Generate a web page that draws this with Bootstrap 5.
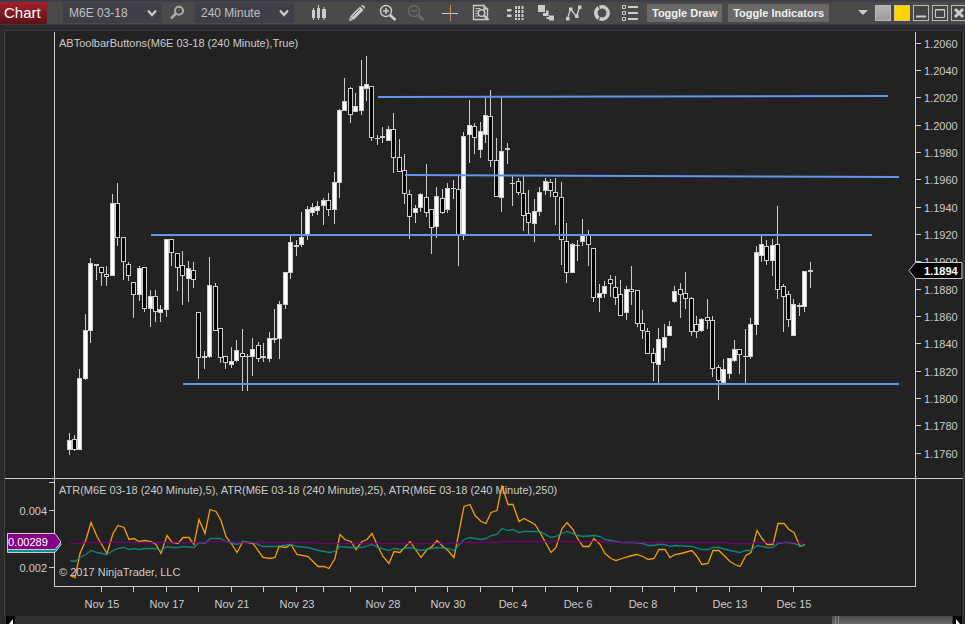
<!DOCTYPE html>
<html lang="en">
<head>
<meta charset="utf-8">
<meta name="viewport" content="width=device-width, initial-scale=1">
<title>Chart</title>
<link href="https://cdn.jsdelivr.net/npm/bootstrap@5.3.0/dist/css/bootstrap.min.css" rel="stylesheet">
<style>
body{background:#2b2a2f;font-family:"Liberation Sans",Arial,sans-serif;color:#ccc;overflow-x:hidden}
.toolbar{height:25px;background:#4a4a4a;border-top:2px solid #3f3e46;border-bottom:1px solid #3a3a3f;overflow:hidden}
.chart-tab{width:47px;height:22px;background:linear-gradient(#a3222b,#5d1216);color:#fff;font-size:15px;line-height:22px;padding:0 0 0 4px;border:0;text-align:left;flex:none}
.pick{--bs-form-select-bg-img:url("data:image/svg+xml,%3csvg xmlns='http://www.w3.org/2000/svg' viewBox='0 0 10 8'%3e%3cpath d='M1 1.5l4 4.5 4-4.5' fill='none' stroke='%23ccc' stroke-width='2.2'/%3e%3c/svg%3e");height:20px;width:99px;min-height:0;border:0;border-radius:0;background-color:#3f3f47;color:#c0c0c0;font-size:12px;line-height:20px;padding:0 20px 0 6px;background-position:right 5px center;background-size:10px 8px;flex:none}
.tool{width:26px;height:22px;padding:0;border:0;background:none;color:#ccc;display:flex;align-items:center;justify-content:center;flex:none}
.tool svg{display:block}
.tool-search{width:33px;padding-right:4px}
.tool-more{width:18px}
.tools{gap:2px;margin-left:12px}
.sp-s{margin-left:3px}.sp-m{margin-left:6px}.sp-l{margin-left:10px}
.toggle{height:18px;border:0;background:#696969;color:#f0f0f0;font-size:11px;font-weight:700;line-height:18px;padding:0 5px;flex:none;white-space:nowrap}
.toggles{gap:6px;margin-left:4px}
.win{width:16px;height:16px;border:1px solid #b8b8b8;padding:0;background:#444;display:flex;align-items:center;justify-content:center;flex:none;color:#ccc}
.wins{gap:3px;margin-right:-2px}
.win-gray{background:linear-gradient(#b5b3b5,#9d9b9d)}
.win-gold{background:#ffd500;border-color:#d9c67a}
.frame{padding:5px 1px 0 4px}
.plot-box{border:1px solid #3d3d42;border-bottom:0;background:#222}
.plot{width:100%;height:auto;display:block;font-size:11px}
.scroller{height:8px;background:#333;margin:0 2px 0 5px;overflow:hidden}
.arrow{width:9px;height:8px;background:#000;border:0;padding:0;flex:none;display:flex;margin:0 1px}
.thumb{width:120px;height:8px;background:linear-gradient(#4c4c4c,#6a6a6a);border:0;padding:0 0 0 3px;display:flex;gap:2px}
.thumb i{width:1px;height:8px;background:#888}
</style>
<script src="https://cdn.jsdelivr.net/npm/bootstrap@5.3.0/dist/js/bootstrap.bundle.min.js"></script>
</head>
<body>
<header class="toolbar d-flex align-items-center">
  <button class="chart-tab" type="button">Chart</button>
  <select class="form-select pick ms-3" aria-label="Instrument"><option>M6E 03-18</option></select>
  <button class="tool tool-search" type="button" aria-label="Search"><svg width="16" height="16" viewBox="0 0 16 16" fill="none" stroke="#aaa"><circle cx="10" cy="5.800" r="4" stroke-width="2"/><path d="M7 8.500L2 13.500" stroke-width="2.600"/></svg></button>
  <select class="form-select pick" aria-label="Interval"><option>240 Minute</option></select>
  <div class="tools d-flex align-items-center">
    <button class="tool" type="button" aria-label="Chart style"><svg width="16" height="18" viewBox="0 0 16 18" fill="#ccc"><path d="M1 6h3v8H1zM6 4h3v10H6zM11 5h4v9h-4zM2 4h1v12H2zM7 1h1v15H7zM12.500 3h1v13h-1z"/></svg></button>
    <button class="tool sp-l" type="button" aria-label="Drawing tools"><svg width="18" height="18" viewBox="0 0 18 18"><path d="M1 17l1.500-5L12 2.500 15.500 6 6 15.500z" fill="#ccc"/><path d="M13 1.500Q14 .5 15.500 1.500L16.600 2.600Q17.500 4 16.500 5z" fill="#ccc"/><path d="M4.500 12.500L12 5M2.500 13.500l2 2" stroke="#666" fill="none"/></svg></button>
    <button class="tool sp-s" type="button" aria-label="Zoom in"><svg width="18" height="18" viewBox="0 0 18 18" fill="none" stroke="#ccc"><circle cx="7" cy="7" r="5.500" stroke-width="1.400"/><path d="M4 7h6M7 4v6" stroke-width="1.600"/><path d="M11 11l5.500 5" stroke-width="2.800"/></svg></button>
    <button class="tool" type="button" aria-label="Zoom out" disabled><svg width="18" height="18" viewBox="0 0 18 18" fill="none" stroke="#6a6a6a"><circle cx="7" cy="7" r="5.500" stroke-width="1.400"/><path d="M4 7h6" stroke-width="1.600"/><path d="M11 11l5.500 5" stroke-width="2.800"/></svg></button>
    <button class="tool sp-m" type="button" aria-label="Crosshair"><svg width="18" height="18" viewBox="0 0 18 18"><path d="M1 9.500h16" stroke="#ccc"/><path d="M9.500 1v16" stroke="#c89055"/></svg></button>
    <button class="tool sp-s" type="button" aria-label="Data box"><svg width="18" height="18" viewBox="0 0 18 18" fill="none" stroke="#ccc"><path d="M12 1.500H1.500v14H15M12 1.500V5h3.500zM15.500 5v8" stroke-width="1.300"/><path d="M3.500 4.500h5M3.500 7h2.500M3.500 9.500h2M3.500 12h3" stroke-width="1.200"/><circle cx="9.500" cy="9" r="3.300" stroke-width="1.500"/><path d="M12 11.500l4.500 4.500" stroke-width="2.400"/></svg></button>
    <button class="tool sp-m" type="button" aria-label="Bars"><svg width="18" height="18" viewBox="0 0 18 18" fill="#ccc"><path d="M1 5h4l1 1.200L5 7.500H1zM1 10.500h4l1 1.200L5 13H1zM9 2h2v3H9zM9 6h2v3H9zM9 10h2v3H9zM9 14h2v2H9zM12 2h2v3h-2zM12 6h2v3h-2zM12 10h2v3h-2zM12 14h2v2h-2zM15.500 2h2v3h-2zM15.500 6h2v3h-2zM15.500 10h2v3h-2zM15.500 14h2v2h-2z"/></svg></button>
    <button class="tool sp-s" type="button" aria-label="Chart trader"><svg width="18" height="18" viewBox="0 0 18 18" fill="#ccc"><path d="M1 1h7v7H1zM6 9h3V6.500h2.500V12H6zM9.500 13h2.500V11.500h5v5h-5V15H9.500z"/></svg></button>
    <button class="tool" type="button" aria-label="Indicators"><svg width="18" height="18" viewBox="0 0 18 18" fill="#ccc"><path d="M2.500 14.500L5.500 5l6 7.500 3-9" fill="none" stroke="#ccc" stroke-width="1.300"/><path d="M1 13h3.500v3.500H1zM4 3.500h3.500V7H4zM10 10.500h3.500V14H10zM13 1.500h3.500V5H13z"/></svg></button>
    <button class="tool" type="button" aria-label="Strategies"><svg width="18" height="18" viewBox="0 0 18 18" fill="none" stroke="#ccc"><circle cx="9" cy="9" r="6.200" stroke-width="3.500" stroke-dasharray="12 1"/></svg></button>
    <button class="tool" type="button" aria-label="Properties"><svg width="18" height="18" viewBox="0 0 18 18"><path d="M1.500 1.500h3v3h-3zM1.500 7.500h3v3h-3zM1.500 13.500h3v3h-3z" fill="none" stroke="#ccc"/><path d="M7 3h10M7 9h10M7 15h10" stroke="#ccc" stroke-width="2"/></svg></button>
  </div>
  <div class="toggles d-flex align-items-center">
    <button class="toggle" type="button">Toggle Draw</button>
    <button class="toggle" type="button">Toggle Indicators</button>
  </div>
  <div class="wins ms-auto d-flex align-items-center">
    <button class="tool tool-more" type="button" aria-label="More"><svg width="10" height="6" viewBox="0 0 10 6"><path d="M0 0h10L5 5z" fill="#ccc"/></svg></button>
    <button class="win win-gray" type="button" aria-label="Instrument link"></button>
    <button class="win win-gold" type="button" aria-label="Interval link"></button>
    <button class="win" type="button" aria-label="Minimize"><svg width="14" height="14"><path d="M2 10.500h10" stroke="#ccc" stroke-width="2"/></svg></button>
    <button class="win" type="button" aria-label="Maximize"><svg width="14" height="14"><path d="M2.500 3.500h9v8h-9zM2 4h10" fill="none" stroke="#ccc"/></svg></button>
    <button class="win" type="button" aria-label="Close"><svg width="14" height="14"><path d="M3 3l8 8M11 3l-8 8" stroke="#ccc" stroke-width="3"/></svg></button>
  </div>
</header>
<main class="frame">
  <div class="plot-box"><svg class="plot" id="plot" viewBox="5 31 958 585" role="img" aria-label="M6E 03-18, 240 minute candles with ATR"></svg></div>
</main>
<div class="scroller d-flex">
  <button class="arrow" type="button" aria-label="Scroll left"><svg width="9" height="8"><path d="M7 3v5H3z" fill="#fff"/></svg></button>
  <button class="thumb ms-auto" type="button" aria-label="Scroll position"><i></i><i></i></button>
  <button class="arrow" type="button" aria-label="Scroll right"><svg width="9" height="8"><path d="M3 3v5h4z" fill="#fff"/></svg></button>
</div>
<script>
const NS='http://www.w3.org/2000/svg', plot=document.getElementById('plot');
function add(tag,attrs,text){const e=document.createElementNS(NS,tag);for(const k in attrs)e.setAttribute(k,attrs[k]);if(text)e.textContent=text;plot.appendChild(e);return e}
function rect(x,y,w,h,fill){add('rect',{x,y,width:w,height:h,fill})}
function label(x,y,t,o){add('text',Object.assign({x,y,fill:'#ccc'},o),t)}
const AX='#ccc';

// Each bar: high, body top, body bottom, low; w = rising, b = falling
const bars=`433 440 450 455 w,435 439 450 451 b,369 378 450 450 w,314 330 379 380 w,258 263 331 343 w,264 264 266 280 w,267 267 273 286 b,266 274 277 286 b,194 203 276 276 w,183 203 238 246 b
237 237 262 280 b,262 264 276 281 b,282 282 295 318 b,266 268 295 301 w,267 267 309 312 b,290 296 309 327 w,290 296 312 322 b,305 309 313 322 w,239 239 310 317 w,239 239 253 266 b
253 253 268 291 b,251 265 276 305 b,261 268 279 302 w,262 270 280 288 b,312 312 358 379 b,351 356 358 369 w,257 285 357 358 w,283 286 331 331 b,328 328 358 363 b,356 356 363 369 b
347 361 365 368 w,340 350 361 362 w,329 353 357 391 b,354 356 357 391 w,338 349 357 376 w,342 345 359 362 b,343 356 358 362 w,332 338 359 362 w,309 338 340 343 w,301 304 339 359 w
272 272 305 309 w,236 242 273 279 w,240 245 247 256 w,212 237 245 247 w,206 209 236 240 w,203 207 213 216 w,201 206 211 215 w,198 200 206 225 w,193 200 210 216 b,172 182 210 224 w
109 110 183 198 w,78 101 111 111 w,87 88 115 123 b,93 106 112 112 w,60 86 111 115 w,56 84 89 101 w,86 86 138 141 b,135 138 139 145 w,127 136 138 143 w,126 129 141 141 w
113 129 158 173 b,139 157 172 172 b,154 170 194 204 b,190 194 217 239 b,205 208 213 223 w,193 194 208 212 w,164 197 213 217 b,209 209 228 254 b,187 196 227 238 w,189 198 213 214 b
183 188 210 213 w,180 188 189 199 w,175 189 235 266 b,132 136 235 240 w,100 125 135 163 w,123 126 138 154 b,122 131 150 158 w,98 115 135 143 w,90 116 161 167 b,138 160 197 197 b
97 151 198 212 w,143 148 150 164 w,176 183 184 206 w,178 181 193 195 b,176 193 216 231 b,190 213 223 234 b,199 211 224 242 w,187 192 212 216 w,178 181 191 195 w,179 182 191 197 b
178 192 197 225 b,182 197 240 265 b,223 241 273 283 b,243 244 273 273 w,240 245 246 261 w,219 235 242 246 w,230 235 245 266 b,248 248 298 302 b,284 293 298 312 w,281 286 294 298 w
275 279 284 297 b,276 287 298 305 b,280 294 316 316 b,286 289 313 320 w,266 289 292 305 b,290 290 324 327 b,310 323 331 339 b,328 331 354 354 b,348 353 363 381 b,328 339 365 383 w
324 337 348 361 w,321 326 336 336 w,286 291 302 303 w,283 289 295 318 b,272 293 299 309 b,297 298 332 336 b,316 324 332 338 b,318 319 331 332 w,299 317 321 329 b,316 320 369 377 b
365 367 381 400 b,359 369 383 383 w,358 358 374 379 w,340 349 361 362 w,349 349 355 374 b,329 356 357 384 w,318 324 357 359 w,246 252 325 335 w,236 244 256 262 w,240 246 261 265 b
239 245 261 276 w,206 244 290 299 b,284 286 297 332 b,291 294 320 327 b,299 304 336 336 w,303 305 307 316 w,271 271 307 312 w,262 270 272 288 w`.split(/[,\n]/);
bars.forEach((s,i)=>{
  const [h,t,b,l,c]=s.split(' '), x=Math.floor(69+5.41*i);
  rect(x,h,1,l-h,AX);
  rect(x-2,t,5,b-t,AX);
  if(b-t>2) rect(x-1,+t+1,3,b-t-2,c==='w'?'#fff':'#000');
});

// Drawn price levels
[[378,97,888,96],[405,175,899,177],[151,235,872,235],[183,384,899,384]].forEach(([x1,y1,x2,y2])=>add('line',{x1,y1,x2,y2,stroke:'#6495ed','stroke-width':2}));

// Axes
rect(54,32,1,555,AX);rect(915,32,1,555,AX);rect(5,478,958,1,AX);rect(54,586,862,1,AX);
[43,70,97,125,152,179,207,234,261,289,316,343,371,398,425,453].forEach((y,i)=>{
  rect(916,y,5,1,AX);label(924,y+5,(1.206-i*0.002).toFixed(4));
});
[482,510,567].forEach(y=>rect(49,y,5,1,AX));
label(47,515,'0.004',{'text-anchor':'end'});label(47,572,'0.002',{'text-anchor':'end'});
[101,133,166,198,231,263,296,323,350,382,415,447,480,512,545,577,610,642,674,696,729,761,793].forEach(x=>rect(x,587,1,5,AX));
[[102,'Nov 15'],[167,'Nov 17'],[232,'Nov 21'],[297,'Nov 23'],[383,'Nov 28'],[448,'Nov 30'],[513,'Dec 4'],[578,'Dec 6'],[643,'Dec 8'],[730,'Dec 13'],[794,'Dec 15']].forEach(([x,t])=>label(x,608,t,{'text-anchor':'middle'}));
label(59,47,'ABToolbarButtons(M6E 03-18 (240 Minute),True)');
label(59,494,'ATR(M6E 03-18 (240 Minute),5), ATR(M6E 03-18 (240 Minute),25), ATR(M6E 03-18 (240 Minute),250)');

// ATR series
function series(points,stroke,o){add('polyline',{points,fill:'none',stroke,'stroke-width':1.3,opacity:o,transform:'translate(0 .5)'})}
series('70,575 75,577 80,553 86,539 91,522 97,536 107,553 113,533 118,525 124,527 129,539 134,538 139,541 145,540 151,541 156,544 161,553 167,535 172,542 178,543 183,537 189,537 194,544 199,519 205,533 210,509 216,511 221,520 226,536 232,544 237,552 243,541 253,543 263,557 270,558 275,557 279,546 286,547 291,544 297,554 308,556 318,566 324,566 329,568 335,558 340,534 345,539 351,541 356,549 362,541 367,539 372,533 378,546 383,556 389,563 394,551 400,552 410,541 421,557 427,549 432,546 437,540 443,546 448,550 454,557 464,506 470,504 475,515 481,521 486,523 491,512 497,510 502,485 508,504 513,504 519,521 524,518 535,524 540,532 551,552 556,547 562,528 567,522 573,529 578,539 583,546 589,546 594,538 600,544 605,553 611,558 616,560 625,557 632,555 637,554 643,556 648,559 654,558 659,549 665,549 670,557 675,554 681,553 692,550 697,556 702,564 708,563 713,550 719,550 730,561 735,564 740,566 746,555 751,552 757,530 762,538 767,544 773,544 778,523 784,523 789,529 794,532 800,546 805,544','#ffa50a',.95);
series('70,560 75,561 80,557 86,554 91,550 97,552 107,554 113,550 118,548 124,547 129,549 134,548 139,549 145,548 156,548 161,550 167,546 172,547 178,547 183,546 194,547 199,542 205,543 210,538 220,538 226,541 237,544 243,541 253,542 263,546 275,546 291,544 297,546 308,547 319,550 329,552 335,551 340,546 351,547 362,547 372,544 378,547 389,550 394,548 400,549 410,547 421,550 437,547 448,548 454,550 464,539 470,537 481,539 486,538 491,535 497,534 502,528 508,530 513,529 519,532 524,531 540,531 551,537 556,536 562,533 567,531 578,535 583,536 594,535 600,536 605,539 622,542 634,542 643,543 648,545 654,545 659,544 665,544 670,546 675,545 692,546 702,549 708,549 713,547 719,547 730,550 740,552 746,550 751,550 757,545 767,547 773,547 778,543 784,542 789,542 794,543 800,545 805,545','#0f8f88',.9);
series('70,543 82,543 86,542 205,542 210,541 226,541 237,542 315,542 320,543 450,543 461,542 497,542 502,541 605,541 620,542 725,542 730,543 750,543 757,542 805,542','#800080',.8);
label(59,576,'© 2017 NinjaTrader, LLC');

// Value markers
add('path',{d:'M7.500 535.500H55L61 544.500 55 552.500H7.500z',fill:'#009590',stroke:AX});
add('path',{d:'M7.500 533.500H55L61 542 55 549.500H7.500z',fill:'#850085',stroke:AX});
label(8,546,'0.00289',{fill:'#fff'});
add('path',{d:'M909 270.500L915.500 262.500H962V278.500H915.500z',fill:'#000',stroke:AX});
rect(961,263,2,15,'#777');
label(924,275,'1.1894',{fill:'#fff','font-weight':700});
</script>
</body>
</html>
